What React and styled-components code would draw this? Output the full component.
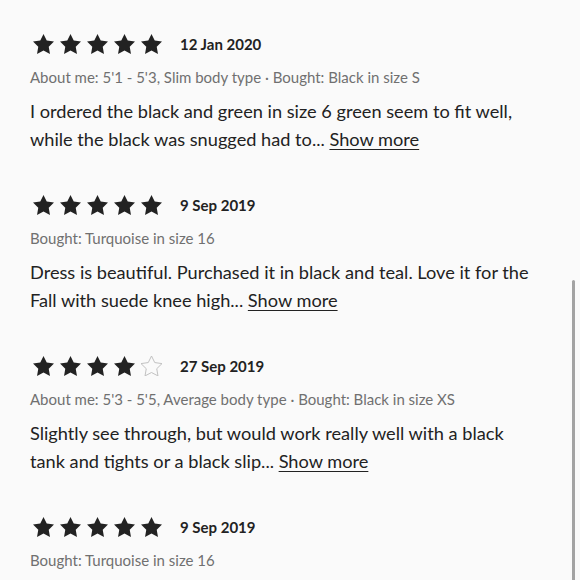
import React from "react";
import styled, { createGlobalStyle } from "styled-components";

const Global = createGlobalStyle`
  html, body { margin: 0; padding: 0; background: #fafafa; }
  body { font-family: Lato, "Noto Sans", sans-serif; color: #222; overflow: hidden; }
`;

const Page = styled.div`
  position: relative;
  width: 580px;
  height: 580px;
  overflow: hidden;
  background: #fafafa;
`;

const List = styled.div`
  display: flex;
  flex-direction: column;
  padding: 34px 0 0 30px;
`;

const Review = styled.article`
  display: flex;
  flex-direction: column;
  padding-bottom: 42px;
`;

const Header = styled.div`
  display: flex;
  align-items: center;
  height: 20px;
`;

const Stars = styled.div`
  display: flex;
  gap: 6px;
  padding-left: 3px;
  margin-right: 18px;
`;

const DateText = styled.span`
  font-size: 15px;
  font-weight: 700;
  color: #222;
  line-height: 20px;
`;

const Meta = styled.div`
  margin-top: 12px;
  font-size: 15px;
  line-height: 22px;
  color: #707070;
`;

const Body = styled.p`
  margin: 9px 0 0;
  width: 505px;
  font-size: 18.2px;
  line-height: 28px;
  color: #222;
`;

const More = styled.a`
  color: #222;
  text-decoration: underline;
  text-underline-offset: 3px;
  text-decoration-thickness: 1px;
  cursor: pointer;
`;

const Thumb = styled.div`
  position: absolute;
  right: 5px;
  top: 280px;
  width: 3px;
  height: 310px;
  border-radius: 2px;
  background: #a3a3a3;
`;

const STAR = "M12 2l3.09 6.26L22 9.27l-5 4.87 1.18 6.88L12 17.77l-6.18 3.25L7 14.14 2 9.27l6.91-1.01L12 2z";

function Star({ filled }) {
  return (
    <svg width="21" height="20" viewBox="2 2 20 19.1">
      <path
        d={STAR}
        fill={filled ? "#222" : "none"}
        stroke={filled ? "none" : "#bdbdbd"}
        strokeWidth={filled ? 0 : 0.9}
        strokeLinejoin="round"
      />
    </svg>
  );
}

const reviews = [
  {
    rating: 5,
    date: "12 Jan 2020",
    meta: "About me: 5'1 - 5'3, Slim body type · Bought: Black in size S",
    text: "I ordered the black and green in size 6 green seem to fit well, while the black was snugged had to...",
  },
  {
    rating: 5,
    date: "9 Sep 2019",
    meta: "Bought: Turquoise in size 16",
    text: "Dress is beautiful. Purchased it in black and teal. Love it for the Fall with suede knee high...",
  },
  {
    rating: 4,
    date: "27 Sep 2019",
    meta: "About me: 5'3 - 5'5, Average body type · Bought: Black in size XS",
    text: "Slightly see through, but would work really well with a black tank and tights or a black slip...",
  },
  {
    rating: 5,
    date: "9 Sep 2019",
    meta: "Bought: Turquoise in size 16",
    text: "Dress is beautiful. Purchased it in black and teal. Love it for the Fall with suede knee high...",
  },
];

export default function App() {
  return (
    <Page>
      <Global />
      <List>
        {reviews.map((r, i) => (
          <Review key={i}>
            <Header>
              <Stars>
                {[0, 1, 2, 3, 4].map((s) => (
                  <Star key={s} filled={s < r.rating} />
                ))}
              </Stars>
              <DateText>{r.date}</DateText>
            </Header>
            <Meta>{r.meta}</Meta>
            <Body>
              {r.text} <More>Show more</More>
            </Body>
          </Review>
        ))}
      </List>
      <Thumb />
    </Page>
  );
}
